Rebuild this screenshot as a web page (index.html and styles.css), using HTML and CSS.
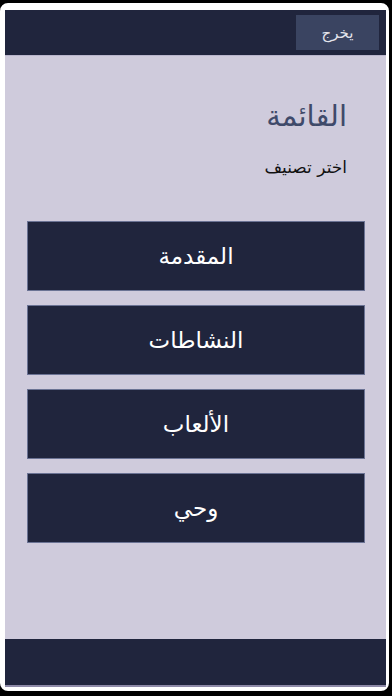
FILE: index.html
```html
<!DOCTYPE html>
<html lang="ar" dir="rtl">
<head>
<meta charset="utf-8">
<link rel="stylesheet" href="styles.css">
</head>
<body>
<div class="device">
  <div class="screen">
    <header class="topbar">
      <button class="exit">يخرج</button>
    </header>
    <main class="content">
      <h1 class="title">القائمة</h1>
      <p class="subtitle">اختر تصنيف</p>
      <nav class="menu">
        <a class="item">المقدمة</a>
        <a class="item">النشاطات</a>
        <a class="item">الألعاب</a>
        <a class="item">وحي</a>
      </nav>
    </main>
    <footer class="bottombar"></footer>
  </div>
</div>
</body>
</html>
```
FILE: styles.css
```css
html, body {
  margin: 0;
  padding: 0;
  background: #000;
  width: 392px;
  height: 696px;
  overflow: hidden;
}
body {
  font-family: "DejaVu Sans", sans-serif;
}
.device {
  margin: 3px 3px 5px 0;
  height: 688px;
  box-sizing: border-box;
  border-style: solid;
  border-color: #fff;
  border-width: 7px 3px 4px 5px;
  border-radius: 8px;
  background: #fff;
}
.screen {
  height: 100%;
  display: flex;
  flex-direction: column;
  background: #cfcbdc;
}
.topbar {
  height: 45px;
  background: #20253d;
  border-bottom: 1px solid #b9b5cc;
  display: flex;
  align-items: center;
  padding-right: 7px;
  flex-shrink: 0;
}
.exit {
  width: 83px;
  height: 35px;
  background: #3a4461;
  border: none;
  color: #e4e4ec;
  font-family: "DejaVu Sans", sans-serif;
  font-size: 15px;
  padding: 0;
}
.content {
  flex: 1;
  padding: 0 21px 0 22px;
}
.title {
  margin: 40px 18px 0 0;
  font-size: 29px;
  font-weight: normal;
  color: #3f4a6a;
  line-height: 40px;
}
.subtitle {
  margin: 20px 18px 0 0;
  font-size: 17px;
  color: #111;
  line-height: 22px;
}
.menu {
  margin-top: 43px;
  display: flex;
  flex-direction: column;
  gap: 14px;
}
.item {
  height: 68px;
  background: #20253d;
  border: 1px solid #6b7394;
  color: #fff;
  font-size: 23px;
  display: flex;
  align-items: center;
  justify-content: center;
}
.bottombar {
  height: 46px;
  background: #20253d;
  border-bottom: 2px solid #8e8aa8;
  flex-shrink: 0;
}
```
